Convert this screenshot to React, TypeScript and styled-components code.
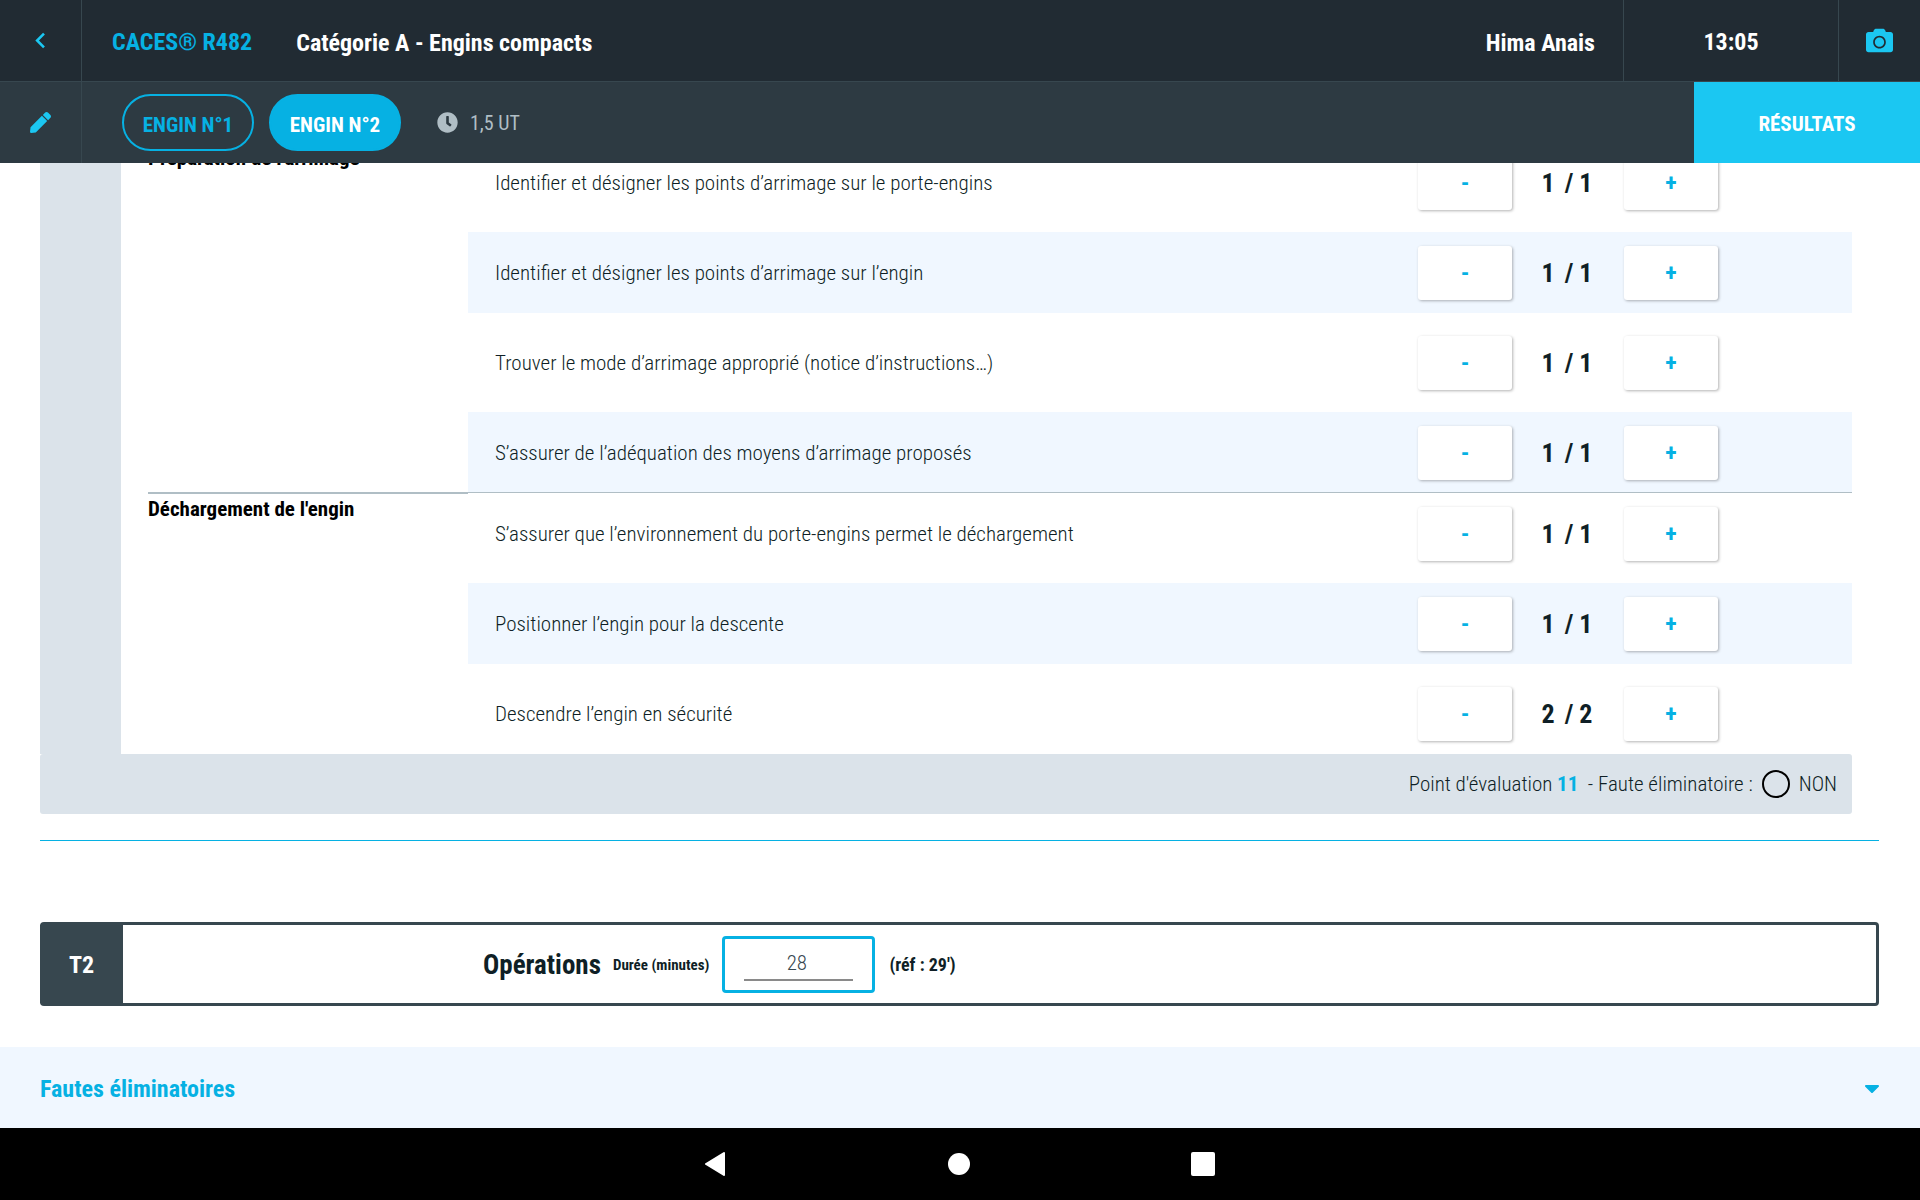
import React from 'react';
import styled, { createGlobalStyle } from 'styled-components';
import { FaCamera, FaClock, FaPen } from 'react-icons/fa';
import { MdChevronLeft } from 'react-icons/md';

const GlobalStyle = createGlobalStyle`
  *, *::before, *::after { box-sizing: border-box; }
  body { margin: 0; overflow: hidden; }
  body, button, input { font-family: "Roboto Condensed", Roboto, "Liberation Sans", sans-serif; }
`;

const Screen = styled.div`
  display: flex;
  flex-direction: column;
  height: 100vh;
  background: #fff;
  color: #0f1f26;
`;

const Bar = styled.header<{ $top?: boolean }>`
  display: flex;
  flex: none;
  align-items: stretch;
  height: ${(p) => (p.$top ? 82 : 81)}px;
  background: ${(p) => (p.$top ? '#212b33' : '#2d3a42')};
  border-bottom: ${(p) => (p.$top ? '1px solid #37474f' : 'none')};
`;

const IconButton = styled.button<{ $side: 'left' | 'right' }>`
  display: flex;
  align-items: center;
  justify-content: center;
  width: 82px;
  padding: 0;
  border: 0;
  border-${(p) => (p.$side === 'left' ? 'right' : 'left')}: 1px solid #37474f;
  background: none;
  color: #1bc7f2;
`;

const Titles = styled.div`
  display: flex;
  flex: 1;
  align-items: center;
  gap: 44px;
  padding: 2px 0 0 30px;
`;

const Norm = styled.span`
  font-size: 24px;
  font-weight: 700;
  color: #06b1e3;
`;

const Title = styled.h1`
  margin: 0;
  padding-top: 2px;
  font-size: 24px;
  font-weight: 700;
  color: #fff;
`;

const UserName = styled.span`
  align-self: center;
  padding: 4px 28px 0 0;
  font-size: 24px;
  font-weight: 700;
  color: #fff;
`;

const Clock = styled.time`
  display: flex;
  align-items: center;
  justify-content: center;
  width: 215px;
  padding-top: 2px;
  border-left: 1px solid #37474f;
  font-size: 24px;
  font-weight: 700;
  color: #fff;
`;

const Engines = styled.nav`
  display: flex;
  flex: 1;
  align-items: center;
  gap: 15px;
  padding-left: 40px;
`;

const Pill = styled.button<{ $active?: boolean }>`
  width: 132px;
  height: 57px;
  padding: 4px 0 0;
  border: 2px solid #06b1e3;
  border-radius: 29px;
  background: ${(p) => (p.$active ? '#06b1e3' : 'transparent')};
  font-size: 21px;
  font-weight: 700;
  color: ${(p) => (p.$active ? '#fff' : '#06b1e3')};
`;

const Units = styled.span`
  display: flex;
  align-items: center;
  gap: 12px;
  padding-left: 21px;
  font-size: 20px;
  color: #b0bec5;
`;

const Results = styled.button`
  width: 226px;
  padding: 2px 0 0;
  border: 0;
  background: #1bc7f2;
  font-size: 21px;
  font-weight: 700;
  color: #fff;
`;

const Viewport = styled.main`
  display: flex;
  flex: 1;
  flex-direction: column;
  justify-content: flex-end;
  min-height: 0;
  overflow: hidden;
`;

const Theme = styled.section`
  flex: none;
  margin: 0 68px 0 40px;
`;

const ThemeBody = styled.div`
  padding-left: 81px;
  background: #dbe3ea;
`;

const Group = styled.section`
  display: flex;
  padding-left: 27px;
  background: #fff;
`;

const GroupTitle = styled.h2<{ $divided?: boolean }>`
  flex: none;
  width: 320px;
  margin: ${(p) => (p.$divided ? '-1px' : '0')} 0 0;
  border-top: ${(p) => (p.$divided ? '2px solid #b0bec5' : 'none')};
  padding-top: ${(p) => (p.$divided ? '3px' : '4px')};
  font-size: 21px;
  line-height: 24px;
  font-weight: 700;
  color: #000;
`;

const Criteria = styled.ul`
  display: flex;
  flex: 1;
  flex-direction: column;
  gap: 9px;
  margin: 0;
  padding: 0;
  list-style: none;
`;

const Criterion = styled.li<{ $closing?: boolean }>`
  display: flex;
  align-items: center;
  height: 81px;
  padding: 1px 134px 0 27px;
  border-bottom: ${(p) => (p.$closing ? '1px solid #b0bec5' : 'none')};
  &:nth-child(even) { background: #f0f7ff; }
`;

const CriterionText = styled.span`
  flex: 1;
  font-size: 21px;
  line-height: 26px;
  font-weight: 300;
`;

const StepButton = styled.button`
  width: 94px;
  height: 54px;
  padding: 0;
  border: 0;
  border-radius: 3px;
  background: #fff;
  box-shadow: 1px 1px 3px rgba(0, 0, 0, 0.3);
  font-size: 24px;
  font-weight: 700;
  color: #06b1e3;
`;

const Score = styled.output`
  display: flex;
  justify-content: center;
  gap: 10px;
  width: 112px;
  padding-right: 2px;
  font-size: 26px;
  line-height: 32px;
  font-weight: 700;
`;

const Summary = styled.footer`
  display: flex;
  align-items: center;
  justify-content: flex-end;
  height: 60px;
  padding-right: 15px;
  border-radius: 3px;
  background: #dbe3ea;
  font-size: 21px;
  line-height: 26px;
  font-weight: 300;
  white-space: pre;
`;

const Points = styled.strong`
  font-weight: 700;
  color: #06b1e3;
`;

const FaultChoice = styled.label`
  display: flex;
  align-items: center;
  gap: 9px;
  padding-left: 9px;
`;

const Radio = styled.input`
  appearance: none;
  width: 28px;
  height: 28px;
  margin: 0;
  border: 2px solid #000;
  border-radius: 50%;
`;

const Rule = styled.hr`
  flex: none;
  height: 1px;
  margin: 26px 41px 81px 40px;
  border: 0;
  background: #06b1e3;
`;

const ThemeHeader = styled.section`
  display: flex;
  flex: none;
  align-items: center;
  height: 84px;
  margin: 0 41px 41px 40px;
  border: 3px solid #37474f;
  border-left: 0;
  border-radius: 4px;
`;

const ThemeCode = styled.span`
  display: flex;
  align-items: center;
  justify-content: center;
  align-self: stretch;
  width: 83px;
  margin-right: 360px;
  padding-top: 2px;
  background: #37474f;
  font-size: 24px;
  font-weight: 700;
  color: #fff;
`;

const ThemeName = styled.h2`
  margin: 0 12px 0 0;
  padding-top: 2px;
  font-size: 27px;
  font-weight: 700;
`;

const DurationLabel = styled.label`
  padding-top: 2px;
  font-size: 15px;
  font-weight: 700;
`;

const DurationBox = styled.div`
  display: flex;
  align-items: center;
  width: 153px;
  height: 57px;
  margin: 0 14px 0 13px;
  padding: 0 19px;
  border: 3px solid #06b1e3;
  border-radius: 4px;
`;

const DurationInput = styled.input`
  width: 100%;
  height: 34px;
  padding: 0 4px 0 0;
  border: 0;
  border-bottom: 2px solid #8a8a8a;
  background: none;
  text-align: center;
  font-size: 21px;
  font-weight: 300;
  color: #37474f;
`;

const Reference = styled.span`
  font-size: 18px;
  font-weight: 700;
`;

const Faults = styled.button`
  display: flex;
  flex: none;
  align-items: center;
  justify-content: space-between;
  height: 81px;
  padding: 2px 41px 0 40px;
  border: 0;
  background: #f0f7ff;
  font-size: 24px;
  font-weight: 700;
  color: #06b1e3;
`;

const SystemNav = styled.nav`
  display: flex;
  flex: none;
  align-items: center;
  justify-content: center;
  gap: 208px;
  height: 72px;
  padding-right: 2px;
  background: #000;
`;

const SystemButton = styled.button`
  display: flex;
  justify-content: center;
  width: 36px;
  padding: 0;
  border: 0;
  background: none;
`;

type CriterionData = { text: string; max: number };

const groups: { title: string; items: CriterionData[] }[] = [
  {
    title: "Préparation de l'arrimage",
    items: [
      { text: 'Identifier et désigner les points d’arrimage sur le porte-engins', max: 1 },
      { text: 'Identifier et désigner les points d’arrimage sur l’engin', max: 1 },
      { text: 'Trouver le mode d’arrimage approprié (notice d’instructions…)', max: 1 },
      { text: 'S’assurer de l’adéquation des moyens d’arrimage proposés', max: 1 },
    ],
  },
  {
    title: "Déchargement de l'engin",
    items: [
      { text: 'S’assurer que l’environnement du porte-engins permet le déchargement', max: 1 },
      { text: 'Positionner l’engin pour la descente', max: 1 },
      { text: 'Descendre l’engin en sécurité', max: 2 },
    ],
  },
];

export default function App() {
  return (
    <Screen>
      <GlobalStyle />
      <Bar $top>
        <IconButton $side="left" aria-label="Retour"><MdChevronLeft size={31} /></IconButton>
        <Titles>
          <Norm>CACES® R482</Norm>
          <Title>Catégorie A - Engins compacts</Title>
        </Titles>
        <UserName>Hima Anais</UserName>
        <Clock>13:05</Clock>
        <IconButton $side="right" aria-label="Photo"><FaCamera size={27} /></IconButton>
      </Bar>
      <Bar>
        <IconButton $side="left" aria-label="Modifier"><FaPen size={21} /></IconButton>
        <Engines>
          <Pill>ENGIN N°1</Pill>
          <Pill $active>ENGIN N°2</Pill>
          <Units><FaClock size={21} />1,5 UT</Units>
        </Engines>
        <Results>RÉSULTATS</Results>
      </Bar>
      <Viewport>
        <Theme>
          <ThemeBody>
            {groups.map((group, g) => (
              <Group key={group.title}>
                <GroupTitle $divided={g > 0}>{group.title}</GroupTitle>
                <Criteria>
                  {group.items.map(({ text, max }, i) => (
                    <Criterion key={text} $closing={g < groups.length - 1 && i === group.items.length - 1}>
                      <CriterionText>{text}</CriterionText>
                      <StepButton aria-label="Retirer un point">-</StepButton>
                      <Score><span>{max}</span><span>{`/ ${max}`}</span></Score>
                      <StepButton aria-label="Ajouter un point">+</StepButton>
                    </Criterion>
                  ))}
                </Criteria>
              </Group>
            ))}
          </ThemeBody>
          <Summary>
            <span>Point d'évaluation <Points>11</Points>  - Faute éliminatoire :</span>
            <FaultChoice><Radio type="radio" name="faute" />NON</FaultChoice>
          </Summary>
        </Theme>
        <Rule />
        <ThemeHeader>
          <ThemeCode>T2</ThemeCode>
          <ThemeName>Opérations</ThemeName>
          <DurationLabel htmlFor="duree">Durée (minutes)</DurationLabel>
          <DurationBox><DurationInput id="duree" defaultValue="28" /></DurationBox>
          <Reference>(réf : 29')</Reference>
        </ThemeHeader>
        <Faults>
          Fautes éliminatoires
          <svg width="14" height="8" viewBox="0 0 14 8"><path d="M1 1 H13 L7 7 Z" fill="#06b1e3" stroke="#06b1e3" strokeWidth="2" strokeLinejoin="round" /></svg>
        </Faults>
      </Viewport>
      <SystemNav>
        <SystemButton aria-label="Précédent">
          <svg width="22" height="24" viewBox="0 0 22 24"><path d="M20 1 L2 12 L20 23 Z" fill="#fff" stroke="#fff" strokeWidth="2" strokeLinejoin="round" /></svg>
        </SystemButton>
        <SystemButton aria-label="Accueil">
          <svg width="22" height="22" viewBox="0 0 22 22"><circle cx="11" cy="11" r="11" fill="#fff" /></svg>
        </SystemButton>
        <SystemButton aria-label="Applications">
          <svg width="24" height="24" viewBox="0 0 24 24"><rect width="24" height="24" rx="2" fill="#fff" /></svg>
        </SystemButton>
      </SystemNav>
    </Screen>
  );
}
